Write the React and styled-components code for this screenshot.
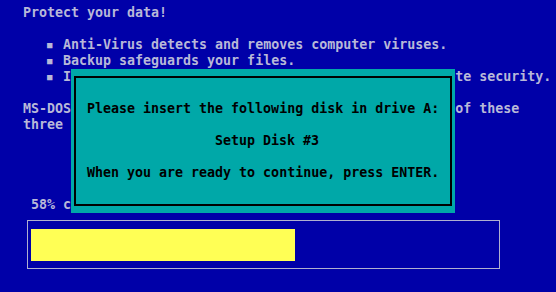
import React from 'react';
import styled, { createGlobalStyle } from 'styled-components';

const COL = 8;
const ROW = 16;

const GlobalStyle = createGlobalStyle`
  html, body {
    margin: 0;
    padding: 0;
    background: #0000a8;
    overflow: hidden;
  }
`;

const Screen = styled.div`
  position: relative;
  width: 556px;
  height: 292px;
  box-sizing: border-box;
  padding: 5px 0 0 23px;
  background: #0000a8;
  color: #b8b8d8;
  font-family: "DejaVu Sans Mono", "Liberation Mono", monospace;
  font-size: 13.3px;
  font-weight: bold;
  line-height: ${ROW}px;
  overflow: hidden;
`;

const Line = styled.div`
  height: ${ROW}px;
  white-space: pre;
  padding-left: ${props => (props.indent || 0) * COL}px;
`;

const Blank = styled.div`
  height: ${props => (props.rows || 1) * ROW}px;
`;

const BulletList = styled.ul`
  list-style: none;
  margin: 0;
  padding: 0 0 0 ${3 * COL}px;
`;

const Bullet = styled.li`
  display: flex;
  height: ${ROW}px;
  white-space: pre;

  &::before {
    content: '■';
    width: ${2 * COL}px;
    font-size: 9px;
  }
`;

const Dialog = styled.div`
  position: absolute;
  left: 71px;
  top: 69px;
  width: ${48 * COL}px;
  height: ${9 * ROW}px;
  box-sizing: border-box;
  padding-top: ${2 * ROW}px;
  background: #00a8a8;
  color: #000;
  display: flex;
  flex-direction: column;
  gap: ${ROW}px;

  &::before {
    content: '';
    position: absolute;
    left: 3px;
    right: 3px;
    top: 7px;
    bottom: 7px;
    border: 2px solid #000;
  }
`;

const Progress = styled.div`
  margin: 7px 0 0 4px;
  width: 473px;
  box-sizing: border-box;
  border: 1px solid #b0b0d0;
  padding: 8px 3px 7px;
`;

const Fill = styled.div`
  height: ${2 * ROW}px;
  background: #ffff55;
`;

const bullets = [
  'Anti-Virus detects and removes computer viruses.',
  'Backup safeguards your files.',
  'Integrated tools help give your data'.padEnd(43) + 'complete security.',
];

export default function App() {
  const percent = 58;
  const filled = 33;

  return (
    <Screen>
      <GlobalStyle />
      <Line>Protect your data!</Line>
      <Blank />
      <BulletList>
        {bullets.map(text => (
          <Bullet key={text}>{text}</Bullet>
        ))}
      </BulletList>
      <Blank />
      <Line>{'MS-DOS Setup can install any or all'.padEnd(54) + 'of these'}</Line>
      <Line>three programs.</Line>
      <Blank rows={4} />
      <Line indent={1}>{percent}% complete</Line>
      <Progress>
        <Fill style={{ width: filled * COL }} />
      </Progress>

      <Dialog>
        <Line indent={2}>Please insert the following disk in drive A:</Line>
        <Line indent={18}>Setup Disk #3</Line>
        <Line indent={2}>When you are ready to continue, press ENTER.</Line>
      </Dialog>
    </Screen>
  );
}
